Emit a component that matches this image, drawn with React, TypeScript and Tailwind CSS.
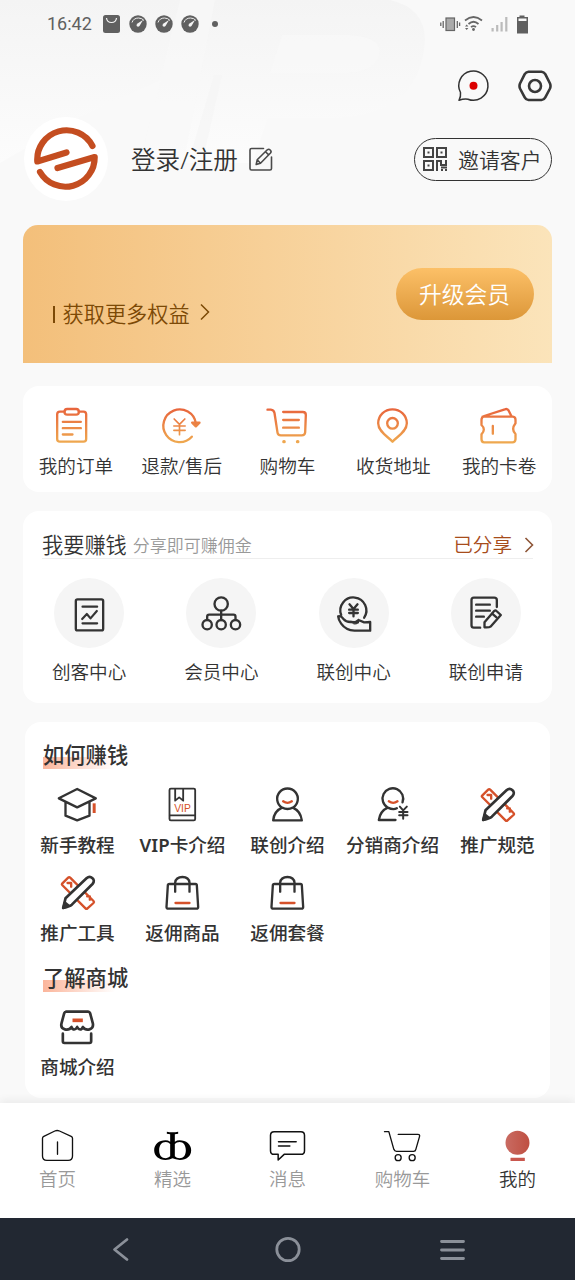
import type { ReactNode } from "react";

const INK = "#333333";
const ACCENT = "#d5512a";

type IconProps = { children: ReactNode; stroke?: string; width?: number; className?: string };

/* Shared 44px icon canvas, drawn on a 132-unit grid. */
function Icon({ children, stroke = INK, width = 7, className = "h-11 w-11" }: IconProps) {
  return (
    <svg
      viewBox="1.500 0 132 132"
      className={`block shrink-0 ${className}`}
      fill="none"
      stroke={stroke}
      strokeWidth={width}
      strokeLinecap="round"
      strokeLinejoin="round"
    >
      {children}
    </svg>
  );
}

function WarmIcon({ id, children }: { id: string; children: ReactNode }) {
  return (
    <Icon stroke={`url(#${id})`} width={7}>
      <defs>
        <linearGradient id={id} gradientUnits="userSpaceOnUse" x1="0" y1="12" x2="0" y2="120">
          <stop offset="0" stopColor="#e8643c" />
          <stop offset="1" stopColor="#efab50" />
        </linearGradient>
      </defs>
      {children}
    </Icon>
  );
}

const orders = [
  {
    label: "我的订单",
    icon: (
      <WarmIcon id="g1">
        <path d="M33 23H19Q11 23 11 31V105Q11 113 19 113H90Q98 113 98 105V31Q98 23 90 23H76" />
        <rect x="33" y="15" width="43" height="17" rx="8" />
        <path d="M28 53.5H82M28 72.500H82M28 91.500H57" />
      </WarmIcon>
    ),
  },
  {
    label: "退款/售后",
    icon: (
      <WarmIcon id="g2">
        <path d="M97 98A49 49 0 1 1 109 58" />
        <path d="M98 56L120 56L109 67Z" fill="#e9733f" />
        <path d="M44 45L60 61L76 45M60 61V92M43 66H77M43 79H77" strokeWidth="5" />
      </WarmIcon>
    ),
  },
  {
    label: "购物车",
    icon: (
      <WarmIcon id="g3">
        <path d="M9 17H19Q28 18 30 27L39 86Q40 94 49 94H112Q121 94 122 85L124 33Q124 24 115 24H56M56 48H103M56 71H103" />
        <path d="M58 113H59M99 113H100" strokeWidth="10" />
      </WarmIcon>
    ),
  },
  {
    label: "收货地址",
    icon: (
      <WarmIcon id="g4">
        <path d="M66 113C54 99 23 84 23 58A43 42 0 0 1 109 58C109 84 78 99 66 113Z" />
        <circle cx="66" cy="58" r="16" />
      </WarmIcon>
    ),
  },
  {
    label: "我的卡卷",
    icon: (
      <WarmIcon id="g5">
        <path d="M18 38H109Q117 39 117 47V58Q103 76 117 90V106Q116 115 108 115H23Q15 115 15 106V91Q29 76 15 63V47Q15 40 23 36L85 16Q93 13 97 21L105 37" />
        <path d="M49 66V89" />
      </WarmIcon>
    ),
  },
];

const earn = [
  {
    label: "创客中心",
    icon: (
      <Icon>
        <rect x="28" y="25" width="82" height="93" rx="5" />
        <path d="M48 47H92M48 97H92M47 84L61 69L72 82L91 60" strokeWidth="6.500" />
      </Icon>
    ),
  },
  {
    label: "会员中心",
    icon: (
      <Icon>
        <circle cx="68" cy="39" r="20" />
        <circle cx="26" cy="101" r="14" />
        <circle cx="68" cy="101" r="14" />
        <circle cx="111" cy="101" r="14" />
        <path d="M68 59V87M26 86V77Q26 71 32 71H105Q111 71 111 77V86" />
      </Icon>
    ),
  },
  {
    label: "联创中心",
    icon: (
      <Icon>
        <path d="M29 72A39 39 0 1 1 98 80" />
        <path d="M54 40L66 54L78 40M66 54V76M53 56H79M53 66H79" />
        <path d="M20 76Q28 73 36 84Q43 93 57 93L79 94L81 87Q70 98 58 93M79 94Q69 101 60 93M81 87L98 94L116 93V119H69Q43 118 29 98Q21 87 20 76" />
      </Icon>
    ),
  },
  {
    label: "联创申请",
    icon: (
      <Icon>
        <path d="M50 110H31Q24 110 24 103V27Q24 20 31 20H92Q100 20 100 27V48M38 41H79M38 59H79M38 77H61" />
        <path d="M63 94L92 60Q96 57 99 60L112 72L81 107Q77 110 63 109Z" />
        <path d="M86 68L99 79" />
      </Icon>
    ),
  },
];

const toolIcon = (
  <Icon>
    <path d="M20 38L38 20Q41 17 44 20L114 90Q117 93 114 96L96 112Q93 115 90 112L20 42Q18 40 20 38M36 36H47V47M95 76H103V86" stroke={ACCENT} />
    <path d="M23 111L30 82L93 22C105 11 123 26 111 39L49 101Q43 106 23 111Z" fill="#fff" strokeWidth="8" />
    <path d="M23 111L28 94L40 104Z" fill={INK} />
  </Icon>
);

const bagIcon = (
  <Icon>
    <path d="M27 39H105Q109 39 109 43L113 108Q113 113 108 113H23Q18 113 18 108L22 43Q22 39 27 39" />
    <path d="M44 62V35Q46 18 66 18Q85 18 87 35V62" />
    <path d="M45 96H87" stroke={ACCENT} />
  </Icon>
);

const guides = [
  {
    label: "新手教程",
    icon: (
      <Icon>
        <path d="M10 46L65 18L121 46L65 73ZM30 58V98L65 112L102 98V58" />
        <path d="M116 61V90" stroke={ACCENT} strokeWidth="9" strokeLinecap="butt" />
      </Icon>
    ),
  },
  {
    label: "VIP卡介绍",
    icon: (
      <Icon width={5.5}>
        <rect x="27" y="17" width="77" height="95" rx="4" />
        <path d="M44 18V53L56 43L68 53V18M28 97H103" />
        <text x="66" y="88" fontSize="31" textAnchor="middle" fill={ACCENT} stroke="none" fontFamily="Liberation Sans">
          VIP
        </text>
      </Icon>
    ),
  },
  {
    label: "联创介绍",
    icon: (
      <Icon>
        <path d="M50 74A31 31 0 1 1 82 74Q105 84 109 112H23Q26 84 50 74Q66 82 82 74" />
        <path d="M53 55Q66 64 79 55" stroke={ACCENT} />
      </Icon>
    ),
  },
  {
    label: "分销商介绍",
    icon: (
      <Icon>
        <path d="M96 58A31 31 0 1 0 52 74Q29 84 25 111H75M52 74Q68 82 79 76" />
        <path d="M55 55Q68 64 81 55" stroke={ACCENT} />
        <path d="M88 71L98 82L109 71M98 82V107M86 87H111M86 97H111" strokeWidth="6" />
      </Icon>
    ),
  },
  { label: "推广规范", icon: toolIcon },
  { label: "推广工具", icon: toolIcon },
  { label: "返佣商品", icon: bagIcon },
  { label: "返佣套餐", icon: bagIcon },
];

const mall = [
  {
    label: "商城介绍",
    icon: (
      <Icon width={8}>
        <path d="M32 20H98Q102 20 104 25L112 55C116 76 91 79 82 66C78 76 70 76 65 66C60 76 52 76 48 66C40 79 13 76 18 55L26 25Q28 20 32 20M22 86V109Q22 114 27 114H102Q107 114 107 109V86" />
        <path d="M51 46H82" stroke={ACCENT} strokeWidth="11" strokeLinecap="butt" />
      </Icon>
    ),
  },
];

const tabs = [
  {
    label: "首页",
    icon: (
      <Icon stroke="#111" width={4}>
        <path d="M21 43Q21 39 25 37L58 21Q65 18 72 21L107 37Q111 39 111 43V96Q111 109 98 109H34Q21 109 21 96ZM66 54V91" />
      </Icon>
    ),
  },
  {
    label: "精选",
    icon: (
      <Icon stroke="none">
        <path
          fill="#000"
          fillRule="evenodd"
          d="M49 23Q66 26 83 23V29L73 31V53Q80 49 87 49C107 49 122 61 122 79C122 97 108 108 88 108Q75 107 66 103Q57 108 45 108C25 108 11 96 11 79C11 61 25 49 45 49Q53 49 59 53V31L49 29ZM59 60Q54 54 46 54C33 54 26 64 26 79C26 94 33 103 46 103Q54 102 59 97ZM73 60V97Q78 103 87 103C99 103 106 94 106 79C106 64 99 54 87 54Q78 54 73 60Z"
        />
      </Icon>
    ),
  },
  {
    label: "消息",
    icon: (
      <Icon stroke="#111" width={4.5}>
        <path d="M26 23H106Q117 23 117 34V80Q117 91 106 91H56L38 108V91H26Q15 91 15 80V34Q15 23 26 23ZM39 53H92M39 66H73" />
      </Icon>
    ),
  },
  {
    label: "购物车",
    icon: (
      <Icon stroke="#111" width={4}>
        <path d="M12 23H25L40 76Q42 82 48 82H99Q105 82 106 76L117 38Q119 31 112 31H53" />
        <circle cx="53" cy="101" r="9" />
        <circle cx="95" cy="101" r="9" />
      </Icon>
    ),
  },
  {
    label: "我的",
    active: true,
    icon: (
      <Icon stroke="none">
        <defs>
          <linearGradient id="me">
            <stop offset="0" stopColor="#c96b62" />
            <stop offset="1" stopColor="#bf4f41" />
          </linearGradient>
        </defs>
        <circle cx="66" cy="56" r="36" fill="url(#me)" />
        <rect x="45" y="101" width="43" height="10" rx="1" fill="#c9574e" />
      </Icon>
    ),
  },
];

function Heading({ children }: { children: ReactNode }) {
  return (
    <h2 className="ml-[18px] flex h-8 w-[86px] items-center bg-[linear-gradient(90deg,#fbb59b,#ffffff)] bg-[length:72px_12px] bg-[position:0_17px] bg-no-repeat text-[21.3px] leading-8 font-medium whitespace-nowrap">
      <span className="-mt-0.5">{children}</span>
    </h2>
  );
}

function GuideGrid({ items }: { items: { label: string; icon: ReactNode }[] }) {
  return (
    <div className="grid grid-cols-5">
      {items.map((item) => (
        <div key={item.label} className="flex h-[88px] flex-col items-center">
          {item.icon}
          <span className="mt-[3.500px] text-[18.6px] leading-7 font-medium whitespace-nowrap">
            {item.label.startsWith("VIP") ? (
              <>
                <span className="font-semibold">VIP</span>
                {item.label.slice(3)}
              </>
            ) : (
              item.label
            )}
          </span>
        </div>
      ))}
    </div>
  );
}

function Gauge() {
  return (
    <svg viewBox="0 0 18 18" className="h-[18px] w-[18px]">
      <circle cx="9" cy="9" r="8.700" fill="#606060" />
      <path d="M3 7.500Q4.500 3 9.500 3Q13 3 15 5.500" stroke="#eee" strokeWidth="1" fill="none" />
      <path d="M14 5L10.500 11Q9 12.500 7.700 11Q7 9.500 8.500 8.500Z" fill="#f5f5f5" />
    </svg>
  );
}

function StatusBar() {
  return (
    <div className="flex h-[47px] items-center justify-between pr-[47px] pl-[47px] text-[#606060]">
      <div className="flex items-center">
        <span className="w-[56px] font-[Roboto] text-[18px] leading-none">16:42</span>
        <svg viewBox="0 0 17 18" className="h-[18px] w-[17px]">
          <rect width="17" height="18" rx="2.500" fill="#606060" />
          <path d="M3.500 3Q4 7.500 8.500 7.500Q13 7.500 13.500 3" stroke="#f5f5f5" strokeWidth="1.200" fill="none" />
        </svg>
        <div className="ml-[8.500px] flex gap-2">
          <Gauge />
          <Gauge />
          <Gauge />
        </div>
        <span className="ml-[13px] h-[6px] w-[6px] rounded-full bg-[#606060]" />
      </div>
      <svg viewBox="0 0 88 20" className="h-5 w-[88px]" fill="none" stroke="#666">
        <rect x="6" y="4" width="8.500" height="12.500" fill="#aaa" strokeWidth="1.200" />
        <path d="M.8 8.500V12M3.200 7V14M17.300 7V14M19.600 8.500V12" strokeWidth="1.300" />
        <path d="M25 6.500Q33.500 -.5 42 6.500M28.500 10Q33.500 5.500 38.500 10M31 13.200Q33.500 11 36 13.200" strokeWidth="1.700" />
        <circle cx="33.500" cy="15.500" r="1.400" fill="#666" stroke="none" />
        <path d="M25 12.500L26.700 10.500L28.400 12.500ZM25 14L26.700 16L28.400 14Z" fill="#666" stroke="none" />
        <path d="M52.600 14V17.500M57.200 11V17.500M61.600 8V17.500M66.300 3V17.500" stroke="#bbb" strokeWidth="2.200" />
        <path d="M77 3H79.500V1.500H84.500V3H88V19.500H77Z" fill="#606060" stroke="none" />
        <path d="M78.500 4.500H86.500V7H78.500Z" fill="#f7f7f7" stroke="none" />
      </svg>
    </div>
  );
}

export default function App() {
  return (
    <div className="relative flex h-[1280px] w-[575px] flex-col overflow-hidden bg-[#f9f9f9] font-['Noto_Sans','Noto_Sans_CJK_SC',sans-serif] text-[#333333]">
      <svg viewBox="0 0 575 225" className="absolute top-0 left-0 h-[225px] w-full">
        <defs>
          <linearGradient id="sky" x1="0" y1="0" x2="0" y2="1">
            <stop offset="0" stopColor="#f4f4f4" />
            <stop offset="1" stopColor="#fcfcfc" />
          </linearGradient>
        </defs>
        <path d="M0 0H390Q425 8 425 40Q420 118 330 118H268L252 163H143L161 80L80 117L0 163Z" fill="url(#sky)" />
        <path d="M180 0H215L186 150H143Z" fill="#f9f9f9" opacity="0.600" />
        <path d="M282 35H350Q380 37 380 52Q375 72 348 73H270Z" fill="#f9f9f9" opacity="0.500" />
        <path d="M222 75H214L192 150H205Z" fill="#f5f5f5" opacity="0.700" />
      </svg>

      <div className="relative flex min-h-0 flex-1 flex-col">
        <StatusBar />

        <div className="mt-[22px] mr-[23px] flex h-[34px] items-center justify-end gap-[28px]">
          <svg viewBox="0 0 34 34" className="h-[34px] w-[34px]" fill="none" stroke={INK} strokeWidth="1.500" strokeLinejoin="round">
            <path d="M4.500 23.500A14.600 14.600 0 1 1 12 30.200Q8 29.500 3 31.300Q5 28 4.500 23.500Z" />
            <circle cx="17.500" cy="16.700" r="4" fill="#db0000" stroke="none" />
          </svg>
          <svg viewBox="0 0 34 34" className="h-[34px] w-[34px]" fill="none" stroke="#373737" strokeWidth="2.600" strokeLinejoin="round">
            <path d="M10.500 2.700H23.500Q26 3 27.300 5.200L32 14.500Q33 17 32 19.500L27.300 28.300Q26 30.800 23.500 31H10.500Q8 30.800 6.700 28.300L2 19.500Q1 17 2 14.500L6.700 5.200Q8 3 10.500 2.700Z" />
            <circle cx="17" cy="17" r="6" />
          </svg>
        </div>

        <div className="mt-[14px] flex h-[84px] items-center pr-[23px] pl-6">
          <div className="flex h-[84px] w-[84px] items-center justify-center rounded-full bg-white">
            <svg viewBox="0 0 66 66" className="h-[66px] w-[66px]" fill="none" stroke="#c44d20" strokeWidth="6.200" strokeLinecap="round" strokeLinejoin="round">
              <path d="M59.500 20A29.300 29.300 0 0 0 4.300 35.500L33.500 26.500" />
              <path d="M7 46A29.300 29.300 0 0 0 61.700 31L24.500 42" />
            </svg>
          </div>
          <span className="mt-0.5 ml-[23px] w-[118px] text-[24.6px] leading-9 font-[350] whitespace-nowrap">登录/注册</span>
          <svg viewBox="0 0 26 26" className="-ml-px h-[26px] w-[26px]" fill="none" stroke="#4a4a4a" strokeWidth="1.600" strokeLinejoin="round" strokeLinecap="round">
            <path d="M15.500 2.500H3.500Q2 2.500 2 4V22.500Q2 24 3.500 24H22Q23.500 24 23.500 22.500V11" />
            <path d="M8.200 18.500L9.200 13.800L19.300 3.800Q20.800 2.700 22.200 4Q23.800 5.500 22.500 7L12.500 17.200ZM17.500 5.700L20.700 8.900M9.200 13.800L12.500 17.200" />
          </svg>
          <div className="ml-auto flex h-[43px] w-[138px] items-center rounded-full border-[1.5px] border-[#333] pl-2">
            <svg viewBox="0 0 24 24" className="h-6 w-6" fill="none" stroke="#444" strokeWidth="2">
              <path d="M1 1H10V10H1ZM14 1H23V10H14ZM1 14H10V23H1Z" />
              <path d="M5.500 4.500V6.500M18.500 4.500V6.500M5.500 17.500V19.500M14 24V14H18V18H23V13M18 23H20M22 23H24M18 20.500H24" />
            </svg>
            <span className="mt-px ml-[11px] text-[20.900px] leading-8 font-[350] whitespace-nowrap">邀请客户</span>
          </div>
        </div>

        <div className="mx-[23px] mt-6 flex h-[138px] justify-between rounded-t-[15px] bg-linear-to-r from-[#f3bf7a] to-[#fbe4ba]">
          <div className="mt-[72.500px] ml-[28px] flex h-8 items-center text-[21.2px] leading-8 font-[350] text-[#7c4906]">
            <span className="mt-0.5 mr-[8px] ml-[2px] h-[17px] w-[1.500px] bg-[#7c4906]" />
            获取更多权益
            <svg viewBox="0 0 12 18" className="mb-[3px] ml-[9px] h-[18px] w-3" fill="none" stroke="#7c4906" strokeWidth="1.500">
              <path d="M2 1.500L9.500 9L2 16.500" />
            </svg>
          </div>
          <div className="mt-[43px] mr-[18.500px] flex h-[52px] w-[138px] items-center justify-center rounded-full bg-linear-to-b from-[#fcc067] to-[#dc9738] pt-0.5 text-[22.8px] leading-8 font-[350] text-white">
            升级会员
          </div>
        </div>

        <section className="mx-[23px] mt-[23px] grid h-[106px] grid-cols-5 rounded-[16px] bg-white pt-[18px]">
          {orders.map((item) => (
            <div key={item.label} className="flex flex-col items-center">
              {item.icon}
              <span className="mt-[3.500px] text-[18.6px] leading-7 font-[350] whitespace-nowrap">{item.label}</span>
            </div>
          ))}
        </section>

        <section className="mx-[23px] mt-[19px] h-[192px] rounded-[16px] bg-white pt-[17px]">
          <div className="mx-[19px] flex h-[31px] items-center border-b border-[#eeeeee] pt-[3px] whitespace-nowrap">
            <span className="text-[21.2px] leading-8 font-[350]">我要赚钱</span>
            <span className="mt-0.5 ml-[6px] text-[17px] leading-7 font-[350] text-[#999]">分享即可赚佣金</span>
            <span className="ml-auto text-[19.6px] leading-8 font-[350] text-[#a74c1b]">已分享</span>
            <svg viewBox="0 0 12 18" className="mr-[-3px] ml-[12px] h-[18px] w-3" fill="none" stroke="#8d5537" strokeWidth="1.600">
              <path d="M1.500 2L8.500 9L1.500 16" />
            </svg>
          </div>
          <div className="mt-[19px] grid grid-cols-4">
            {earn.map((item) => (
              <div key={item.label} className="flex flex-col items-center">
                <div className="flex h-[70px] w-[70px] items-center justify-center rounded-full bg-[#f5f5f5]">{item.icon}</div>
                <span className="mt-[10px] text-[18.6px] leading-7 font-[350]">{item.label}</span>
              </div>
            ))}
          </div>
        </section>

        <section className="mx-[25px] mt-[19px] h-[376px] rounded-[16px] bg-white pt-[18px]">
          <Heading>如何赚钱</Heading>
          <div className="mt-[11px]">
            <GuideGrid items={guides} />
          </div>
          <div className="mt-[4px]">
            <Heading>了解商城</Heading>
          </div>
          <div className="mt-[10px]">
            <GuideGrid items={mall} />
          </div>
        </section>
      </div>

      <nav className="relative grid h-[115px] shrink-0 grid-cols-5 bg-white pt-[21px] shadow-[0_-3px_8px_rgba(0,0,0,0.06)]">
        {tabs.map((tab) => (
          <div key={tab.label} className="flex flex-col items-center">
            {tab.icon}
            <span className={`mt-[-3px] text-[18.5px] leading-7 font-[350] ${tab.active ? "text-[#333]" : "text-[#999]"}`}>
              {tab.label}
            </span>
          </div>
        ))}
      </nav>

      <div className="relative grid h-[62px] shrink-0 grid-cols-[242px_91px_240px] items-center justify-items-center bg-[#222832]">
        <svg viewBox="0 0 28 28" className="h-7 w-7" fill="none" stroke="#8b9099" strokeWidth="2.800" strokeLinecap="round" strokeLinejoin="round">
          <path d="M20 4.500L7.500 14.500L20 24.500" />
        </svg>
        <svg viewBox="0 0 28 28" className="h-7 w-7" fill="none" stroke="#8b9099" strokeWidth="2.800">
          <circle cx="14" cy="14.500" r="11.200" />
        </svg>
        <svg viewBox="0 0 28 28" className="h-7 w-7" fill="none" stroke="#8b9099" strokeWidth="2.800" strokeLinecap="round">
          <path d="M2.500 6.500H24.500M2.500 15H24.500M2.500 23.500H24.500" />
        </svg>
      </div>
    </div>
  );
}
